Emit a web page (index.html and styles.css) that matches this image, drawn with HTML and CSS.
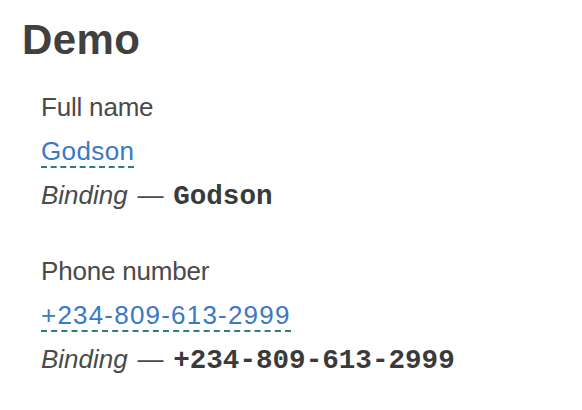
FILE: index.html
```html
<!DOCTYPE html>
<html>
<head>
<meta charset="utf-8">
<link rel="stylesheet" href="styles.css">
</head>
<body>
<main class="page">
  <h1 class="title">Demo</h1>
  <section class="field">
    <div class="label">Full name</div>
    <div class="value"><span class="editable">Godson</span></div>
    <div class="binding"><em>Binding</em> — <code>Godson</code></div>
  </section>
  <section class="field">
    <div class="label">Phone number</div>
    <div class="value"><span class="editable editable-wide">+234-809-613-2999</span></div>
    <div class="binding"><em>Binding</em> — <code>+234-809-613-2999</code></div>
  </section>
</main>
</body>
</html>
```
FILE: styles.css
```css
html, body {
  margin: 0;
  padding: 0;
  background: #ffffff;
}
.page {
  padding: 16px 0 0 22px;
  font-family: "Liberation Sans", Arial, sans-serif;
  color: #444444;
}
.title {
  margin: 0;
  font-size: 42px;
  line-height: 48px;
  font-weight: bold;
  letter-spacing: 0.4px;
  color: #404040;
}
.field {
  margin-left: 19px;
  display: flex;
  flex-direction: column;
}
.field:first-of-type {
  margin-top: 21px;
}
.field + .field {
  margin-top: 32px;
}
.label, .value, .binding {
  font-size: 26px;
  line-height: 44px;
  height: 44px;
  white-space: nowrap;
}
.label {
  color: #4a4a4a;
  letter-spacing: -0.2px;
}
.editable {
  color: #3a78c8;
  border-bottom: 2px dashed #2a7e7e;
  letter-spacing: 0.4px;
}
.editable-wide {
  letter-spacing: 1.2px;
}
.binding {
  color: #4a4a4a;
  word-spacing: 2.5px;
}
.binding em {
  font-style: italic;
}
.binding code {
  font-family: "Liberation Mono", "Courier New", monospace;
  font-weight: bold;
  font-size: 27.6px;
  word-spacing: 0;
  color: #3a3a3a;
}
```
